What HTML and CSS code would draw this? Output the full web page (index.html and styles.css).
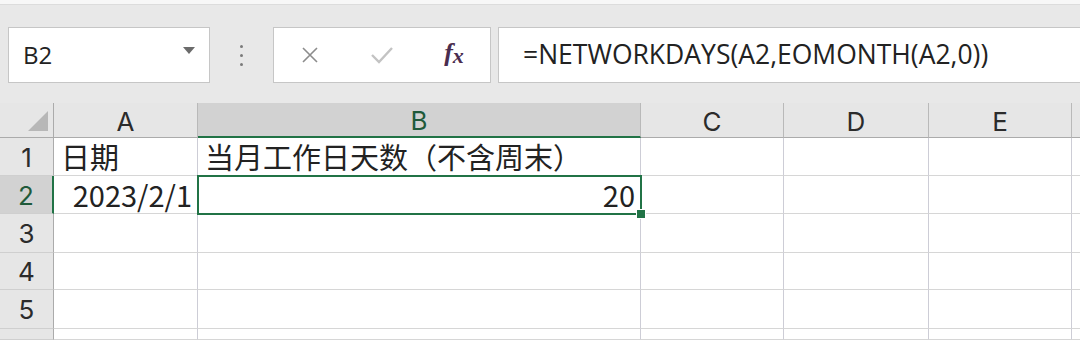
FILE: index.html
```html
<!DOCTYPE html>
<html lang="zh-CN">
<head>
    <meta charset="UTF-8">
    <meta name="viewport" content="width=device-width, initial-scale=1.0">
    <title>NETWORKDAYS</title>
    <link rel="stylesheet" href="styles.css">
</head>
<body>

    <div class="formula-bar">
        <div class="name-box">
            <span>B2</span>
            <svg class="arrow" width="12" height="8" viewBox="0 0 12 8"><polygon points="0,0 12,0 6,7" fill="#6b6b6b"/></svg>
        </div>
        <div class="dots"><i></i><i></i><i></i></div>
        <div class="fx-box">
            <span class="icon">
                <svg width="18" height="18" viewBox="0 0 18 18"><path d="M2 2 L16 16 M16 2 L2 16" stroke="#8c8c8c" stroke-width="1.6" fill="none"/></svg>
            </span>
            <span class="icon">
                <svg width="22" height="18" viewBox="0 0 22 18"><path d="M1 9 L8 16 L21 2" stroke="#c3c3c3" stroke-width="2.4" fill="none"/></svg>
            </span>
            <span class="icon fx"><i>f</i><i class="x">x</i></span>
        </div>
        <div class="formula">=NETWORKDAYS(A2,EOMONTH(A2,0))</div>
    </div>

    <div class="sheet">
        <div class="hd corner">
            <svg width="20" height="20" viewBox="0 0 20 20"><polygon points="20,0 20,20 0,20" fill="#b7b7b7"/></svg>
        </div>
        <div class="hd col">A</div>
        <div class="hd col active-col">B</div>
        <div class="hd col">C</div>
        <div class="hd col">D</div>
        <div class="hd col">E</div>
        <div class="hd col"></div>

        <div class="hd row">1</div>
        <div class="cell">日期</div>
        <div class="cell">当月工作日天数（不含周末）</div>
        <div class="cell"></div><div class="cell"></div><div class="cell"></div><div class="cell"></div>

        <div class="hd row active-row">2</div>
        <div class="cell num">2023/2/1</div>
        <div class="cell num selected">20</div>
        <div class="cell"></div><div class="cell"></div><div class="cell"></div><div class="cell"></div>

        <div class="hd row">3</div>
        <div class="cell"></div><div class="cell"></div><div class="cell"></div><div class="cell"></div><div class="cell"></div><div class="cell"></div>

        <div class="hd row">4</div>
        <div class="cell"></div><div class="cell"></div><div class="cell"></div><div class="cell"></div><div class="cell"></div><div class="cell"></div>

        <div class="hd row">5</div>
        <div class="cell"></div><div class="cell"></div><div class="cell"></div><div class="cell"></div><div class="cell"></div><div class="cell"></div>

        <div class="hd row"></div>
        <div class="cell"></div><div class="cell"></div><div class="cell"></div><div class="cell"></div><div class="cell"></div><div class="cell"></div>
    </div>

</body>
</html>
```

FILE: styles.css
```css
body {
    margin: 0;
    padding: 0;
    width: 1080px;
    height: 340px;
    overflow: hidden;
    background-color: #fff;
    font-family: "Noto Sans CJK SC", sans-serif;
    color: #222;
}

/* ---- formula bar ---- */
.formula-bar {
    display: flex;
    align-items: flex-start;
    height: 103px;
    padding: 23px 0 0 8px;
    box-sizing: border-box;
    border-top: 4px solid #f7f7f7;
    background-color: #e8e8e8;
    box-shadow: inset 0 1px 0 #dcdcdc;
}

.name-box,
.fx-box,
.formula {
    height: 56px;
    box-sizing: border-box;
    background-color: #fff;
    border: 1px solid #c6c6c6;
}

.name-box {
    width: 202px;
    display: flex;
    align-items: center;
    justify-content: space-between;
    padding: 0 14px 2px 14px;
    font-family: "Open Sans", sans-serif;
    font-size: 24px;
    color: #222;
}

.arrow {
    margin-top: -6px;
}

.dots {
    width: 63px;
    height: 56px;
    display: flex;
    flex-direction: column;
    align-items: center;
    justify-content: center;
    gap: 6px;
}

.dots i {
    width: 3px;
    height: 3px;
    background-color: #7a7a7a;
    border-radius: 50%;
}

.fx-box {
    width: 218px;
    margin-right: 7px;
    display: grid;
    grid-template-columns: repeat(3, 1fr);
    align-items: center;
}

.icon {
    display: flex;
    justify-content: center;
    align-items: center;
}

.fx {
    font-family: "Liberation Serif", serif;
    font-size: 26px;
    font-weight: bold;
    color: #4a2d4f;
    padding-bottom: 4px;
}

.fx .x {
    font-size: 22px;
    margin-top: 6px;
}

.formula {
    flex: 1;
    margin-right: -2px;
    padding: 0 0 2px 24px;
    display: flex;
    align-items: center;
    font-family: "Open Sans", sans-serif;
    font-size: 26.5px;
    color: #222;
}

/* ---- sheet ---- */
.sheet {
    display: grid;
    grid-template-columns: 54px 144px 443px 143px 145px 143px 1fr;
    grid-template-rows: 35px 38px 38px 39px 37px 39px 11px;
}

.hd,
.cell {
    box-sizing: border-box;
    display: flex;
    align-items: center;
    white-space: nowrap;
    line-height: 1;
}

.hd {
    background-color: #e6e6e6;
    justify-content: center;
    color: #2b2b2b;
    font-family: Inter, sans-serif;
    font-size: 26px;
}

.col {
    border-right: 1px solid #b9b9b9;
    border-bottom: 1px solid #ababab;
    padding-top: 3px;
}

.row {
    border-right: 1px solid #ababab;
    border-bottom: 1px solid #cfcfcf;
    padding-top: 2px;
}

.corner {
    justify-content: flex-end;
    align-items: flex-end;
    padding: 0 5px 6px 0;
    border-right: 1px solid #ababab;
    border-bottom: 1px solid #ababab;
}

.active-col {
    background-color: #d2d2d2;
    border-bottom: 2px solid #217346;
    color: #1f5a3a;
}

.active-row {
    background-color: #d2d2d2;
    border-right: 2px solid #217346;
    color: #1f5a3a;
}

.cell {
    border-right: 1px solid #cdcdd6;
    border-bottom: 1px solid #d6d6d6;
    padding: 0 7px;
    font-size: 29px;
    align-items: flex-end;
    padding-bottom: 4px;
}

.num {
    justify-content: flex-end;
    padding-right: 5px;
}

.selected {
    position: relative;
    outline: 2px solid #217346;
    outline-offset: -1px;
    z-index: 1;
}

.selected::after {
    content: "";
    position: absolute;
    right: -6px;
    bottom: -6px;
    width: 8px;
    height: 8px;
    background-color: #217346;
    border: 1px solid #fff;
}
```
